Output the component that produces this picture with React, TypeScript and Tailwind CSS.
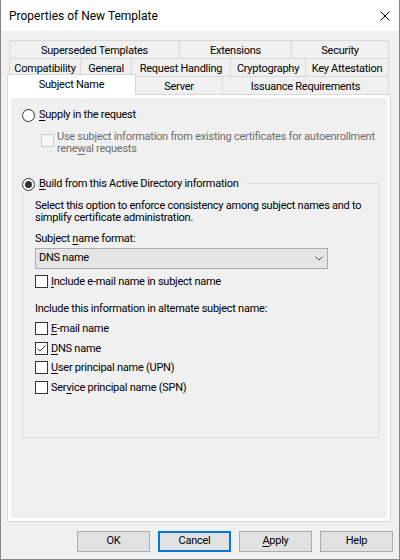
import type { ReactNode } from "react";

type TabDef = { label: string; w: string; last?: boolean };

const ROW_TOP: TabDef[] = [
  { label: "Superseded Templates", w: "w-[170px]" },
  { label: "Extensions", w: "w-[112px]" },
  { label: "Security", w: "w-[98px]", last: true },
];

const ROW_MID: TabDef[] = [
  { label: "Compatibility", w: "w-[71px]" },
  { label: "General", w: "w-[51px]" },
  { label: "Request Handling", w: "w-[99px]" },
  { label: "Cryptography", w: "w-[75px]" },
  { label: "Key Attestation", w: "w-[84px]", last: true },
];

function Tab({ label, w, last }: TabDef) {
  return (
    <div
      className={`flex h-[18px] shrink-0 items-center justify-center whitespace-nowrap border-l border-t border-[#d9d9d9] bg-[#f0f0f0] pt-[3px] ${w} ${last ? "border-r" : ""}`}
    >
      {label}
    </div>
  );
}

function Key({ children }: { children: ReactNode }) {
  return <span className="underline decoration-1 underline-offset-[2px]">{children}</span>;
}

function Radio({ checked }: { checked?: boolean }) {
  return (
    <span className="flex h-[13px] w-[13px] shrink-0 items-center justify-center rounded-full border border-[#333333] bg-white">
      {checked && <span className="h-[7px] w-[7px] rounded-full bg-[#333333]" />}
    </span>
  );
}

function Check({ checked, disabled }: { checked?: boolean; disabled?: boolean }) {
  return (
    <span
      className={`flex h-[13px] w-[13px] shrink-0 items-center justify-center border ${
        disabled ? "border-[#cccccc] bg-[#f7f7f7]" : "border-[#333333] bg-white"
      }`}
    >
      {checked && (
        <svg width="11" height="11" viewBox="0 0 11 11" fill="none">
          <path d="M1.5 5.5 L4 8 L9.5 2.5" stroke="#333333" strokeWidth="1" />
        </svg>
      )}
    </span>
  );
}

function CheckRow({ children, checked, className = "" }: { children: ReactNode; checked?: boolean; className?: string }) {
  return (
    <div className={`flex h-[13px] items-center gap-[3px] ${className}`}>
      <Check checked={checked} />
      <span className="whitespace-nowrap leading-[13px]">{children}</span>
    </div>
  );
}

function Button({ children, focused }: { children: ReactNode; focused?: boolean }) {
  return (
    <div
      className={`flex h-[21px] w-[73px] items-center justify-center bg-[#e1e1e1] ${
        focused ? "border-2 border-[#0078d7]" : "border border-[#adadad]"
      }`}
    >
      {children}
    </div>
  );
}

export default function App() {
  return (
    <div className="flex h-[560px] w-[400px] flex-col border border-t-0 border-[#858585] bg-[#f0f0f0] font-[Roboto,'Liberation_Sans',sans-serif] text-[11px] tracking-[-0.25px] text-black">
      {/* title bar */}
      <div className="flex h-[31px] shrink-0 items-center justify-between bg-white pl-[8px] pr-[9px]">
        <span className="text-[12px] tracking-normal">Properties of New Template</span>
        <svg width="10" height="10" viewBox="0 0 10 10" fill="none">
          <path d="M0.5 0.5 L9.5 9.5 M9.5 0.5 L0.5 9.5" stroke="#000" strokeWidth="1" />
        </svg>
      </div>

      <div className="flex flex-col pl-[6px] pt-[9px]">
        {/* tab rows */}
        <div className="flex pl-[2px]">
          {ROW_TOP.map((t) => (
            <Tab key={t.label} {...t} />
          ))}
        </div>
        <div className="flex pl-[2px]">
          {ROW_MID.map((t) => (
            <Tab key={t.label} {...t} />
          ))}
        </div>
        <div className="flex h-[18px] items-end">
          <div className="relative z-10 -mb-px flex h-[21px] w-[129px] shrink-0 items-center justify-center border-x border-t border-[#d9d9d9] bg-white">
            Subject Name
          </div>
          <div className="flex h-[18px] w-[87px] shrink-0 items-center justify-center border-r border-t border-[#d9d9d9] bg-[#f0f0f0] pt-[3px]">
            Server
          </div>
          <div className="flex h-[18px] w-[166px] shrink-0 items-center justify-center border-r border-t border-[#d9d9d9] bg-[#f0f0f0] pt-[3px]">
            Issuance Requirements
          </div>
        </div>

        {/* tab page */}
        <div className="h-[428px] w-[384px] border border-[#d9d9d9] bg-white p-[3px]">
          <div className="flex h-full flex-col bg-[#f0f0f0] pl-[11px] pr-[8px] pt-[11px]">
            <div className="flex h-[13px] items-center gap-[4px]">
              <Radio />
              <span className="whitespace-nowrap">
                <Key>S</Key>upply in the request
              </span>
            </div>

            <div className="mt-[9px] flex gap-[3px] pl-[19px] text-[#6d6d6d]">
              <div className="mt-[3px]">
                <Check disabled />
              </div>
              <p className="whitespace-nowrap leading-[12px]">
                Use subject information from existing certificates for autoenrollment
                <br />
                rene<Key>w</Key>al requests
              </p>
            </div>

            {/* group box */}
            <div className="relative mt-[28px] h-[255px] border border-[#dcdcdc] pl-[12px] pt-[16px]">
              <div className="absolute left-[-1px] top-[-7px] flex h-[15px] items-center gap-[4px] bg-[#f0f0f0] pr-[8px]">
                <Radio checked />
                <span className="whitespace-nowrap">
                  <Key>B</Key>uild from this Active Directory information
                </span>
              </div>

              <p className="whitespace-nowrap leading-[12px]">
                Select this option to enforce consistency among subject names and to
                <br />
                simplify certificate administration.
              </p>

              <p className="mt-[9px] leading-[12px]">
                Subject <Key>n</Key>ame format:
              </p>

              <div className="mt-[3px] flex h-[21px] w-[293px] items-center justify-between border border-[#adadad] bg-[#e5e5e5] pl-[3px] pr-[4px]">
                <span>DNS name</span>
                <svg width="8" height="5" viewBox="0 0 8 5" fill="none">
                  <path d="M0.5 0.5 L4 4 L7.5 0.5" stroke="#505050" strokeWidth="1" />
                </svg>
              </div>

              <CheckRow className="mt-[6px]">
                <Key>I</Key>nclude e-mail name in subject name
              </CheckRow>

              <p className="mt-[15px] whitespace-nowrap leading-[12px]">
                Include this information in alternate subject name:
              </p>

              <CheckRow className="mt-[7px]">
                <Key>E</Key>-mail name
              </CheckRow>
              <CheckRow className="mt-[7px]" checked>
                <Key>D</Key>NS name
              </CheckRow>
              <CheckRow className="mt-[6px]">
                <Key>U</Key>ser principal name (UPN)
              </CheckRow>
              <CheckRow className="mt-[7px]">
                Ser<Key>v</Key>ice principal name (SPN)
              </CheckRow>
            </div>
          </div>
        </div>
      </div>

      {/* dialog buttons */}
      <div className="mt-[9px] flex justify-end gap-[8px] pr-[6px]">
        <Button>OK</Button>
        <Button focused>Cancel</Button>
        <Button>
          <Key>A</Key>pply
        </Button>
        <Button>Help</Button>
      </div>
    </div>
  );
}
